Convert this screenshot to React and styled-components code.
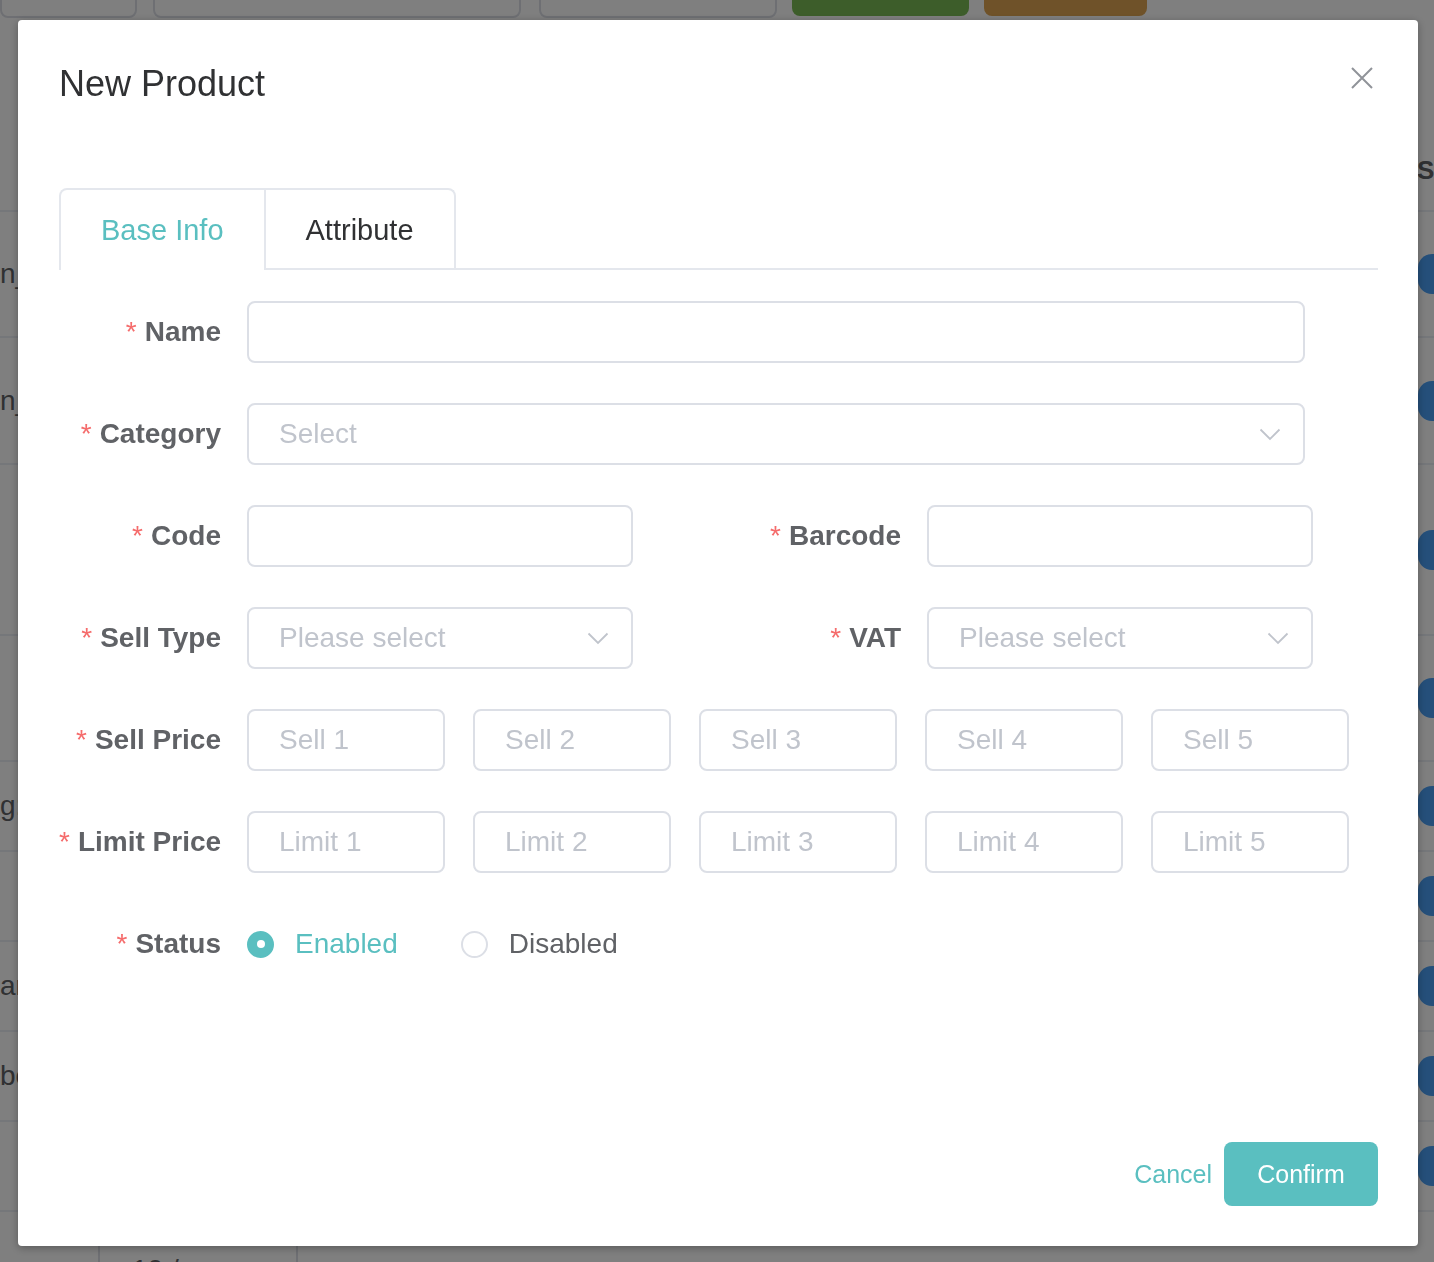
import React from "react";
import styled, { createGlobalStyle } from "styled-components";

const TEAL = "#5abfc0";

const GlobalStyle = createGlobalStyle`
  html, body {
    margin: 0;
    padding: 0;
  }
  body {
    font-family: "Liberation Sans", Arial, sans-serif;
    -webkit-font-smoothing: antialiased;
  }
  * {
    box-sizing: border-box;
  }
`;

/* ---------- page behind the dialog ---------- */

const Page = styled.div`
  position: relative;
  height: 100vh;
  overflow: hidden;
  background: #ffffff;
  color: #606266;
  font-size: 28px;
`;

const Toolbar = styled.div`
  display: flex;
  align-items: flex-start;
  margin-top: -48px;
  height: 66px;
`;

const ToolBox = styled.div`
  width: ${(p) => p.$w}px;
  margin-left: ${(p) => p.$ml || 0}px;
  height: 66px;
  border: 2px solid #dcdfe6;
  border-radius: 8px;
  background: #fff;
`;

const ToolButton = styled.div`
  width: ${(p) => p.$w}px;
  margin-left: ${(p) => p.$ml}px;
  height: 64px;
  border-radius: 8px;
  background: ${(p) => p.$bg};
`;

const Table = styled.div`
  margin-top: 112px;
`;

const TableRow = styled.div`
  display: grid;
  grid-template-columns: 1fr 17px;
  align-items: center;
  height: ${(p) => p.$h}px;
  border-bottom: 2px solid #ebeef5;
`;

const Cell = styled.div`
  white-space: nowrap;
  overflow: visible;
  font-size: ${(p) => (p.$head ? 26 : 28)}px;
  font-weight: ${(p) => (p.$head ? 700 : 400)};
  color: #606266;
`;

const Pill = styled.div`
  width: 90px;
  height: 40px;
  margin-left: 1px;
  border-radius: 14px;
  background: #4a9ff5;
`;

const Pagination = styled.div`
  display: flex;
  align-items: center;
  margin-top: 28px;
  height: 60px;
`;

const PageArrow = styled.div`
  width: 98px;
  padding-left: 50px;
  color: #c0c4cc;
`;

const PageSize = styled.div`
  display: flex;
  align-items: center;
  justify-content: space-between;
  width: 200px;
  height: 60px;
  padding: 0 24px 0 32px;
  border-left: 2px solid #dcdfe6;
  border-right: 2px solid #dcdfe6;
  color: #606266;
  font-size: 28px;
`;

const Mask = styled.div`
  position: fixed;
  inset: 0;
  background: rgba(0, 0, 0, 0.5);
`;

/* ---------- dialog ---------- */

const Dialog = styled.div`
  position: fixed;
  top: 20px;
  left: 18px;
  width: 1400px;
  height: 1226px;
  display: flex;
  flex-direction: column;
  background: #fff;
  border-radius: 4px;
  box-shadow: 0 2px 8px rgba(0, 0, 0, 0.3);
`;

const Header = styled.div`
  padding: 40px 40px 20px 41px;
`;

const Title = styled.div`
  font-size: 36px;
  line-height: 48px;
  color: #303133;
`;

const CloseButton = styled.button`
  position: absolute;
  top: 42px;
  right: 40px;
  width: 32px;
  height: 32px;
  padding: 0;
  border: none;
  background: transparent;
  display: flex;
  align-items: center;
  justify-content: center;
  cursor: pointer;
`;

const Body = styled.div`
  flex: 1;
  padding: 60px 40px 0 41px;
`;

const TabHeader = styled.div`
  display: flex;
  height: 82px;
  border-bottom: 2px solid #e4e7ed;
  margin-bottom: 31px;
`;

const TabNav = styled.div`
  display: flex;
  border: 2px solid #e4e7ed;
  border-bottom: none;
  border-radius: 8px 8px 0 0;
  margin-bottom: -2px;
`;

const Tab = styled.div`
  padding: 0 40px;
  height: 80px;
  line-height: 80px;
  font-size: 29px;
  color: ${(p) => (p.$active ? TEAL : "#303133")};
  border-left: ${(p) => (p.$first ? "none" : "2px solid #e4e7ed")};
  border-bottom: 2px solid ${(p) => (p.$active ? "#fff" : "#e4e7ed")};
`;

const FormRow = styled.div`
  display: flex;
  align-items: center;
  height: 62px;
  margin-bottom: 40px;
`;

const Label = styled.label`
  flex: none;
  width: ${(p) => p.$w || 188}px;
  padding-right: 26px;
  text-align: right;
  font-size: 28px;
  font-weight: 700;
  color: #606266;
  white-space: nowrap;

  &::before {
    content: "*";
    color: #f56c6c;
    font-weight: 400;
    margin-right: 8px;
  }
`;

const Input = styled.input`
  flex: none;
  width: ${(p) => p.$w}px;
  height: 62px;
  padding: 0 30px;
  border: 2px solid #dcdfe6;
  border-radius: 8px;
  font-family: inherit;
  font-size: 28px;
  color: #606266;
  outline: none;

  &::placeholder {
    color: #c0c4cc;
  }
`;

const SelectBox = styled.div`
  flex: none;
  display: flex;
  align-items: center;
  justify-content: space-between;
  width: ${(p) => p.$w}px;
  height: 62px;
  padding: 0 22px 0 30px;
  border: 2px solid #dcdfe6;
  border-radius: 8px;
  font-size: 28px;
  color: #c0c4cc;
`;

const PriceGroup = styled.div`
  display: flex;
  gap: 28px;
`;

const RadioGroup = styled.div`
  display: flex;
  align-items: center;
  gap: 63px;
`;

const RadioItem = styled.label`
  display: flex;
  align-items: center;
  gap: 21px;
  font-size: 28px;
  color: ${(p) => (p.$checked ? TEAL : "#606266")};
  cursor: pointer;
`;

const RadioDot = styled.span`
  width: 27px;
  height: 27px;
  border-radius: 50%;
  display: flex;
  align-items: center;
  justify-content: center;
  background: ${(p) => (p.$checked ? TEAL : "#fff")};
  border: 2px solid ${(p) => (p.$checked ? TEAL : "#dcdfe6")};

  &::after {
    content: "";
    width: 8px;
    height: 8px;
    border-radius: 50%;
    background: ${(p) => (p.$checked ? "#fff" : "transparent")};
  }
`;

const Footer = styled.div`
  display: flex;
  justify-content: flex-end;
  align-items: center;
  padding: 20px 40px 40px;
`;

const TextButton = styled.button`
  border: none;
  background: transparent;
  padding: 0 12px;
  font-family: inherit;
  font-size: 25px;
  color: ${TEAL};
  cursor: pointer;
`;

const PrimaryButton = styled.button`
  width: 154px;
  height: 64px;
  border: none;
  border-radius: 8px;
  background: ${TEAL};
  color: #fff;
  font-family: inherit;
  font-size: 25px;
  cursor: pointer;
`;

const Chevron = ({ color = "#c0c4cc" }) => (
  <svg width="22" height="13" viewBox="0 0 22 13" fill="none">
    <path d="M1.5 1.5 L11 11 L20.5 1.5" stroke={color} strokeWidth="1.8" />
  </svg>
);

const Select = ({ w, placeholder }) => (
  <SelectBox $w={w}>
    <span>{placeholder}</span>
    <Chevron />
  </SelectBox>
);

const rows = [
  { h: 126, text: "n_product" },
  { h: 127, text: "n_goods" },
  { h: 171, text: "" },
  { h: 126, text: "" },
  { h: 90, text: "g:" },
  { h: 90, text: "" },
  { h: 90, text: "ar" },
  { h: 90, text: "bo" },
  { h: 90, text: "" },
];

export default function App() {
  return (
    <>
      <GlobalStyle />
      <Page>
        <Toolbar>
          <ToolBox $w={137} />
          <ToolBox $w={368} $ml={16} />
          <ToolBox $w={238} $ml={18} />
          <ToolButton $w={177} $ml={15} $bg="#7abb55" />
          <ToolButton $w={163} $ml={15} $bg="#dea552" />
        </Toolbar>
        <Table>
          <TableRow $h={82}>
            <Cell $head />
            <Cell $head>Status</Cell>
          </TableRow>
          {rows.map((r, i) => (
            <TableRow key={i} $h={r.h}>
              <Cell>{r.text}</Cell>
              <div>
                <Pill />
              </div>
            </TableRow>
          ))}
        </Table>
        <Pagination>
          <PageArrow>›</PageArrow>
          <PageSize>
            <span>10 / page</span>
            <Chevron />
          </PageSize>
        </Pagination>

        <Mask />

        <Dialog role="dialog" aria-label="New Product">
          <Header>
            <Title>New Product</Title>
            <CloseButton aria-label="Close">
              <svg width="22" height="22" viewBox="0 0 22 22" fill="none">
                <path d="M1 1 L21 21 M21 1 L1 21" stroke="#909399" strokeWidth="2" />
              </svg>
            </CloseButton>
          </Header>

          <Body>
            <TabHeader>
              <TabNav>
                <Tab $first $active>Base Info</Tab>
                <Tab>Attribute</Tab>
              </TabNav>
            </TabHeader>

            <FormRow>
              <Label>Name</Label>
              <Input $w={1058} />
            </FormRow>

            <FormRow>
              <Label>Category</Label>
              <Select w={1058} placeholder="Select" />
            </FormRow>

            <FormRow>
              <Label>Code</Label>
              <Input $w={386} />
              <Label $w={294}>Barcode</Label>
              <Input $w={386} />
            </FormRow>

            <FormRow>
              <Label>Sell Type</Label>
              <Select w={386} placeholder="Please select" />
              <Label $w={294}>VAT</Label>
              <Select w={386} placeholder="Please select" />
            </FormRow>

            <FormRow>
              <Label>Sell Price</Label>
              <PriceGroup>
                {[1, 2, 3, 4, 5].map((n) => (
                  <Input key={n} $w={198} placeholder={`Sell ${n}`} />
                ))}
              </PriceGroup>
            </FormRow>

            <FormRow>
              <Label>Limit Price</Label>
              <PriceGroup>
                {[1, 2, 3, 4, 5].map((n) => (
                  <Input key={n} $w={198} placeholder={`Limit ${n}`} />
                ))}
              </PriceGroup>
            </FormRow>

            <FormRow>
              <Label>Status</Label>
              <RadioGroup>
                <RadioItem $checked>
                  <RadioDot $checked />
                  Enabled
                </RadioItem>
                <RadioItem>
                  <RadioDot />
                  Disabled
                </RadioItem>
              </RadioGroup>
            </FormRow>
          </Body>

          <Footer>
            <TextButton>Cancel</TextButton>
            <PrimaryButton>Confirm</PrimaryButton>
          </Footer>
        </Dialog>
      </Page>
    </>
  );
}
